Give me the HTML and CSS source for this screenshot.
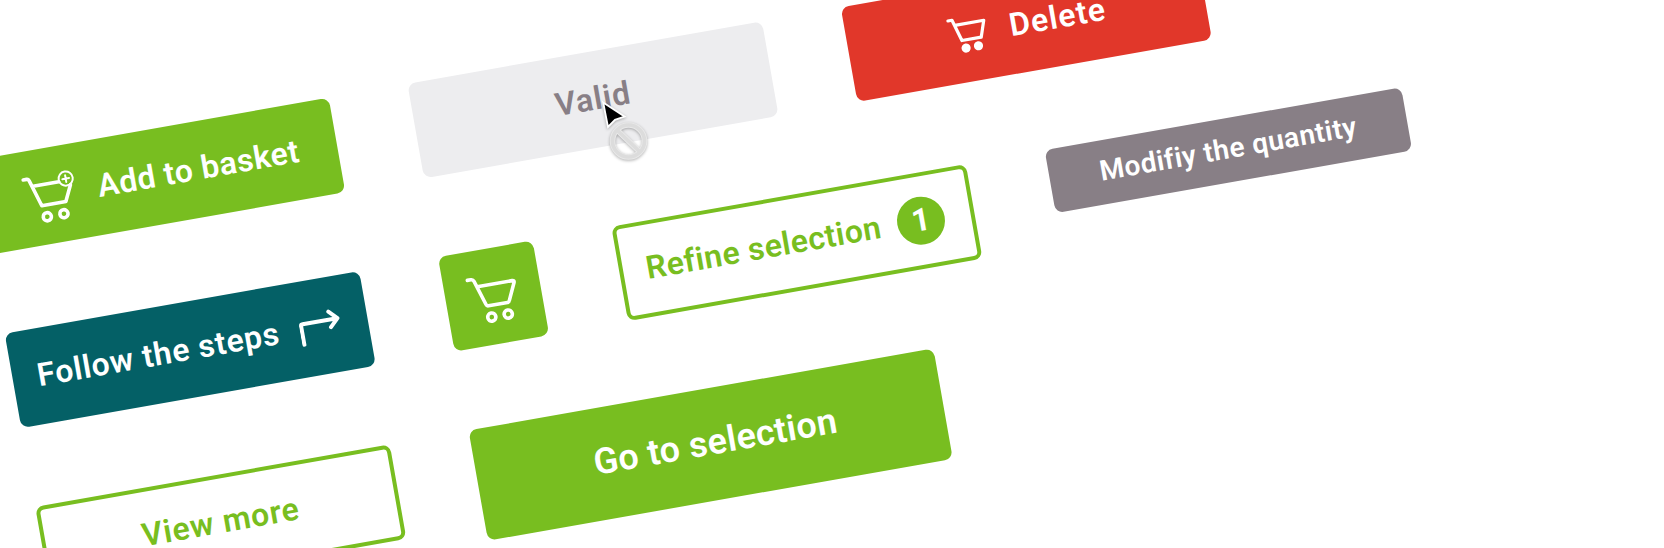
FILE: index.html
```html
<!DOCTYPE html>
<html lang="en">
<head>
<meta charset="utf-8">
<title>Buttons</title>
<link rel="stylesheet" href="styles.css">
</head>
<body>
<svg width="0" height="0" class="defs" aria-hidden="true">
  <symbol id="cart" viewBox="0 0 56 56">
    <path d="M4.9 8H8.4Q10.6 8 11.3 10.1L19.1 35Q19.6 36.7 21.3 36.7H40.6Q42.3 36.7 42.8 35L50.5 18.2Q51.3 16 48.9 16H13.6"/>
    <circle cx="22.6" cy="48.4" r="4.1"/><circle cx="39.3" cy="48.3" r="4.1"/>
  </symbol>
</svg>
<main class="board">
  <div class="row">
    <button class="btn green add">
      <svg class="icon" viewBox="0 0 56 56">
        <path d="M4.9 8H8.4Q10 8 10.6 9.6L18.8 36.6H43.2L50.6 21M13.6 16H39.6"/>
        <circle cx="22.3" cy="48.4" r="4.1"/><circle cx="39.2" cy="48.3" r="4.1"/>
        <g class="fine"><circle cx="47" cy="14" r="7.1"/><path d="M43.6 14H50.4M47 10.6V17.4"/></g>
      </svg>
      <span class="label">Add to basket</span>
    </button>
    <button class="btn disabled"><span class="label">Valid</span></button>
    <button class="btn red delete">
      <svg class="icon small" viewBox="0 0 40 40">
        <path d="M2.2 4H6.3L12.6 25.7H32.2L37.6 9.5H8.4"/>
        <circle class="solid" cx="15.4" cy="33.8" r="4.6"/><circle class="solid" cx="28" cy="33.7" r="4.6"/>
      </svg>
      <span class="label">Delete</span>
    </button>
  </div>
  <div class="row">
    <button class="btn teal follow">
      <span class="label">Follow the steps</span>
      <svg class="arrow" viewBox="0 0 42 34"><path d="M2.2 32.3V13.4Q2.2 11.6 4 11.6H39M31.5 3.7L39.4 11.6L31.5 19.3"/></svg>
    </button>
    <button class="btn green square"><svg class="icon"><use href="#cart"/></svg></button>
    <button class="btn outline refine"><span class="label">Refine selection</span><span class="badge">1</span></button>
    <button class="btn grey"><span class="label">Modifiy the quantity</span></button>
  </div>
  <div class="row">
    <button class="btn outline more"><span class="label">View more</span></button>
    <button class="btn green large"><span class="label">Go to selection</span></button>
  </div>
</main>
<svg class="cursor" viewBox="595 90 65 80">
  <path class="pointer" d="M603.2 102.5L624.5 116.6L615 119.8L608 127Z"/>
  <g class="blocked-edge"><circle cx="628.5" cy="141" r="16"/><path d="M617 130L640 152"/></g>
  <g class="blocked"><circle cx="628.5" cy="141" r="16"/><path d="M617 130L640 152"/></g>
</svg>
</body>
</html>
```
FILE: styles.css
```css
html { height: 548px; overflow: hidden; }
body { margin: 0; height: 548px; overflow: hidden; background: #fff; }
.defs { position: absolute; }
.board {
  width: 1500px;
  display: flex;
  flex-direction: column;
  gap: 80px;
  transform: translate(-25.9px, 160.2px) rotate(-10deg);
  transform-origin: 0 0;
}
.row { display: flex; align-items: flex-start; gap: 80px; height: 96px; }
.btn {
  box-sizing: border-box;
  flex: none;
  width: 360px;
  height: 96px;
  margin: 0;
  padding: 0;
  border: 0;
  border-radius: 8px;
  display: flex;
  align-items: center;
  justify-content: center;
  color: #fff;
  font: 600 32px/40px Roboto, sans-serif;
  white-space: nowrap;
}
.label { padding-bottom: 2px; }
.green { background: #78be20; }
.red { background: #e1372a; }
.teal { background: #046066; }
.disabled { background: #ededef; color: #887f86; letter-spacing: 0.9px; }
.outline { background: #fff; border: 4px solid #78be20; color: #78be20; }
.add, .follow, .refine, .delete { justify-content: flex-start; }
.add { padding-left: 40px; gap: 21px; letter-spacing: 0.5px; }
.delete { padding-left: 101px; gap: 22px; letter-spacing: 1px; }
.follow { padding-left: 25px; gap: 22px; letter-spacing: 0.7px; }
.follow .label { width: 244px; text-align: left; }
.refine { padding-left: 23px; letter-spacing: 0.45px; }
.refine .label { width: 255px; text-align: left; }
.more { letter-spacing: 0.8px; }
.square { width: 96px; }
.grey { background: #887f86; width: 362px; height: 64px; font-size: 28px; letter-spacing: 0.5px; }
.large { width: 472px; height: 112px; font-size: 36px; padding-left: 10px; letter-spacing: 0.3px; }
.large .label { padding-bottom: 4px; }
.badge {
  width: 48px;
  height: 48px;
  border-radius: 50%;
  background: #78be20;
  color: #fff;
  font-weight: 700;
  line-height: 47px;
  letter-spacing: 0;
}
.icon, .arrow { flex: none; fill: none; stroke: currentColor; stroke-width: 3.6; stroke-linecap: round; stroke-linejoin: round; }
.icon { width: 56px; height: 56px; }
.small { width: 40px; height: 40px; stroke-width: 3.2; }
.solid { fill: currentColor; stroke: none; }
.fine { stroke-width: 2; }
.arrow { width: 42px; height: 34px; stroke-width: 4; }
.cursor { position: absolute; left: 595px; top: 90px; width: 65px; height: 80px; fill: none; filter: drop-shadow(0 1px 1.5px rgba(0, 0, 0, .3)); }
.pointer { fill: #000; stroke: #fff; stroke-width: 1.8; }
.blocked-edge { stroke: #e8e8e8; stroke-width: 5.6; }
.blocked { stroke: #dcdcdc; stroke-width: 3.6; }
```
